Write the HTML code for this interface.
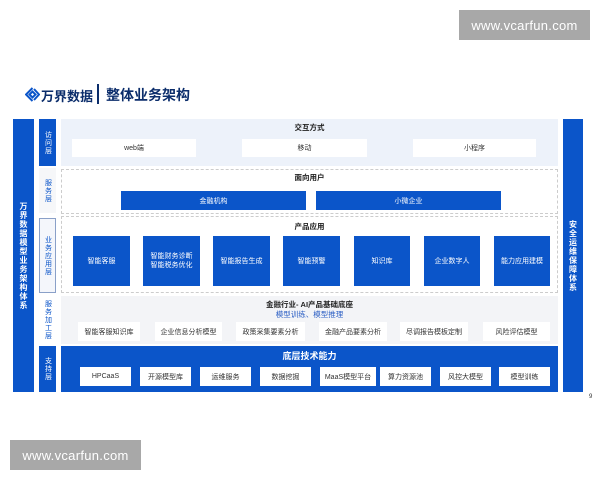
<!DOCTYPE html>
<html><head><meta charset="utf-8"><style>
*{margin:0;padding:0;box-sizing:border-box}
body{width:600px;height:480px;background:#fff;position:relative;overflow:hidden;font-family:"Liberation Sans","Noto Sans CJK SC",sans-serif}
.a{position:absolute}
.blue{background:#0b55c9;color:#fff}
.c{display:flex;align-items:center;justify-content:center;text-align:center}
.v{writing-mode:vertical-rl;letter-spacing:1px}
.wb{background:#fff;color:#333;font-size:7px}
.t{font-size:7.5px;font-weight:bold;color:#222;text-align:center}
.wm{background:#a8a8a8;color:#fff;font-size:13px;letter-spacing:0.3px}
</style></head><body>
<div class="a wm c" style="left:459px;top:10px;width:131px;height:30px">www.vcarfun.com</div>
<div class="a wm c" style="left:10px;top:440px;width:131px;height:30px">www.vcarfun.com</div>

<!-- logo -->
<svg class="a" style="left:25px;top:87px" width="15" height="15" viewBox="0 0 15 15"><g fill="none" stroke="#0b55c9" stroke-width="2"><path d="M7.5 1L1 7.5 7.5 14"/><path d="M7.5 4.5L4.5 7.5 7.5 10.5 10.5 7.5z"/><path d="M9 2l5 5.5-5 5.5"/></g></svg>
<div class="a" style="left:41px;top:86px;font-size:13px;font-weight:bold;color:#0b2d6b">万界数据</div>
<div class="a" style="left:97px;top:84px;width:1.5px;height:20px;background:#0b2d6b"></div>
<div class="a" style="left:106px;top:85px;font-size:14px;font-weight:bold;color:#0b2d6b">整体业务架构</div>

<!-- left bar -->
<div class="a blue c" style="left:13px;top:119px;width:21px;height:273px"><div class="v" style="font-size:8px;font-weight:bold">万界数据模型业务架构体系</div></div>
<div class="a blue c" style="left:563px;top:119px;width:20px;height:273px"><div class="v" style="font-size:8px;font-weight:bold">安全运维保障体系</div></div>
<div class="a" style="left:589px;top:394px;font-size:6px;color:#333">9</div>

<!-- layer labels -->
<div class="a blue c" style="left:39px;top:119px;width:17px;height:47px"><div class="v" style="font-size:7px">访问层</div></div>
<div class="a c" style="left:39px;top:168px;width:17px;height:45px;background:#f6f7f9;color:#0b55c9"><div class="v" style="font-size:7px">服务层</div></div>
<div class="a c" style="left:39px;top:218px;width:17px;height:75px;background:#f4f6fb;border:1px solid #8aa0c8;color:#0b55c9"><div class="v" style="font-size:7px">业务应用层</div></div>
<div class="a c" style="left:39px;top:296px;width:17px;height:48px;color:#0b55c9"><div class="v" style="font-size:7px">服务加工层</div></div>
<div class="a blue c" style="left:39px;top:346px;width:17px;height:46px"><div class="v" style="font-size:7px">支持层</div></div>

<!-- 交互方式 -->
<div class="a" style="left:61px;top:119px;width:497px;height:47px;background:#edf2fa"></div>
<div class="a t" style="left:61px;top:122px;width:497px">交互方式</div>
<div class="a wb c" style="left:72px;top:139px;width:124px;height:18px">web端</div>
<div class="a wb c" style="left:242px;top:139px;width:125px;height:18px">移动</div>
<div class="a wb c" style="left:413px;top:139px;width:123px;height:18px">小程序</div>

<!-- 面向用户 -->
<div class="a" style="left:61px;top:169px;width:497px;height:45px;border:1px dashed #ccc"></div>
<div class="a t" style="left:61px;top:172px;width:497px">面向用户</div>
<div class="a blue c" style="left:121px;top:191px;width:185px;height:19px;font-size:7px">金融机构</div>
<div class="a blue c" style="left:316px;top:191px;width:185px;height:19px;font-size:7px">小微企业</div>

<!-- 产品应用 -->
<div class="a" style="left:61px;top:216px;width:497px;height:77px;border:1px dashed #ccc"></div>
<div class="a t" style="left:61px;top:221px;width:497px">产品应用</div>
<div class="a blue c" style="left:73px;top:236px;width:57px;height:50px;font-size:7px">智能客服</div>
<div class="a blue c" style="left:143px;top:236px;width:57px;height:50px;font-size:7px;line-height:9px">智能财务诊断<br>智能税务优化</div>
<div class="a blue c" style="left:213px;top:236px;width:57px;height:50px;font-size:7px">智能报告生成</div>
<div class="a blue c" style="left:283px;top:236px;width:57px;height:50px;font-size:7px">智能预警</div>
<div class="a blue c" style="left:354px;top:236px;width:56px;height:50px;font-size:7px">知识库</div>
<div class="a blue c" style="left:424px;top:236px;width:56px;height:50px;font-size:7px">企业数字人</div>
<div class="a blue c" style="left:494px;top:236px;width:56px;height:50px;font-size:7px">能力应用建模</div>

<!-- 金融行业 -->
<div class="a" style="left:61px;top:296px;width:497px;height:48px;background:#f3f4f7"></div>
<div class="a t" style="left:61px;top:299px;width:497px">金融行业- AI产品基础底座</div>
<div class="a" style="left:61px;top:309px;width:497px;text-align:center;font-size:7.5px;color:#2c5fc4">模型训练、模型推理</div>
<div class="a wb c" style="left:78px;top:322px;width:62px;height:19px">智能客服知识库</div>
<div class="a wb c" style="left:155px;top:322px;width:67px;height:19px">企业信息分析模型</div>
<div class="a wb c" style="left:236px;top:322px;width:69px;height:19px">政策采集要素分析</div>
<div class="a wb c" style="left:319px;top:322px;width:68px;height:19px">金融产品要素分析</div>
<div class="a wb c" style="left:400px;top:322px;width:68px;height:19px">尽调报告模板定制</div>
<div class="a wb c" style="left:483px;top:322px;width:67px;height:19px">风险评估模型</div>

<!-- 底层技术能力 -->
<div class="a blue" style="left:61px;top:346px;width:497px;height:46px"></div>
<div class="a" style="left:61px;top:349px;width:497px;text-align:center;font-size:9px;font-weight:bold;color:#fff">底层技术能力</div>
<div class="a wb c" style="left:80px;top:367px;width:51px;height:19px">HPCaaS</div>
<div class="a wb c" style="left:140px;top:367px;width:51px;height:19px">开源模型库</div>
<div class="a wb c" style="left:200px;top:367px;width:51px;height:19px">运维服务</div>
<div class="a wb c" style="left:260px;top:367px;width:51px;height:19px">数据挖掘</div>
<div class="a wb c" style="left:320px;top:367px;width:56px;height:19px">MaaS模型平台</div>
<div class="a wb c" style="left:380px;top:367px;width:51px;height:19px">算力资源池</div>
<div class="a wb c" style="left:440px;top:367px;width:51px;height:19px">风控大模型</div>
<div class="a wb c" style="left:499px;top:367px;width:51px;height:19px">模型训练</div>
</body></html>
